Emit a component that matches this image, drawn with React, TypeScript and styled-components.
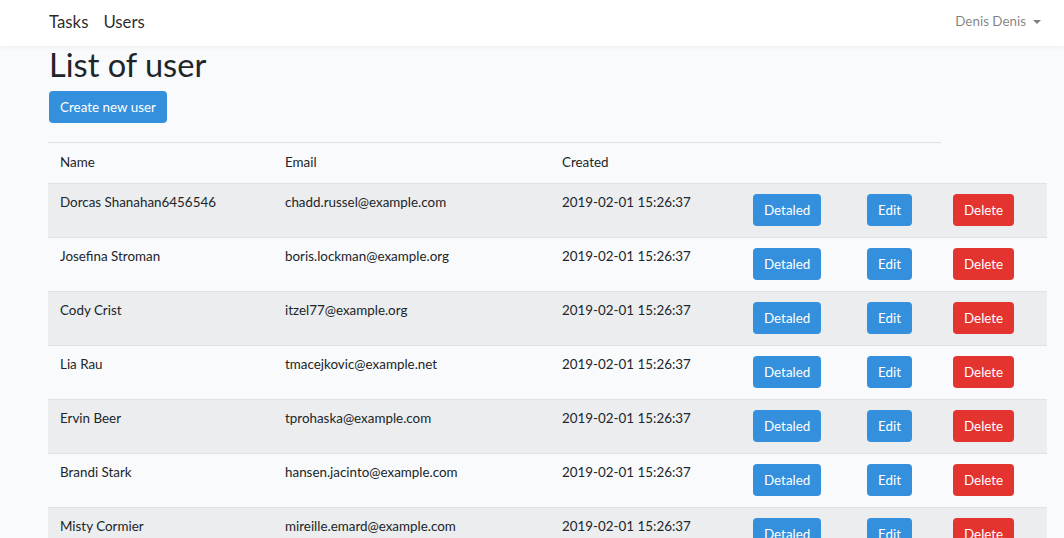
import React from "react";
import styled, { createGlobalStyle } from "styled-components";

const Global = createGlobalStyle`
  html, body { margin: 0; padding: 0; }
  body {
    background: #f8fafc;
    font-family: Lato, "Noto Sans", sans-serif;
    color: #212529;
    font-size: 13.4px;
    overflow: hidden;
  }
  * { box-sizing: border-box; }
`;

const Navbar = styled.nav`
  height: 46px;
  background: #fff;
  box-shadow: 0 2px 4px rgba(0, 0, 0, 0.04);
  display: flex;
  align-items: center;
  justify-content: space-between;
  padding: 0 23px 0 49px;
  position: relative;
  z-index: 1;
`;

const NavLinks = styled.div`
  display: flex;
  gap: 15px;
  margin-top: -4px;
`;

const NavLink = styled.a`
  font-size: 16.8px;
  color: rgba(0, 0, 0, 0.85);
  text-decoration: none;
`;

const UserMenu = styled.div`
  display: flex;
  align-items: center;
  gap: 7px;
  color: rgba(0, 0, 0, 0.5);
  font-size: 13.4px;
  margin-top: -4px;
`;

const Caret = styled.span`
  width: 0;
  height: 0;
  border-left: 4px solid transparent;
  border-right: 4px solid transparent;
  border-top: 4.5px solid rgba(0, 0, 0, 0.5);
  margin-top: 1px;
`;

const Main = styled.main`
  padding-left: 48px;
  display: flex;
  flex-direction: column;
  align-items: flex-start;
`;

const Title = styled.h1`
  margin: 0 0 0 1px;
  font-size: 32.6px;
  font-weight: 400;
  line-height: 38px;
`;

const Button = styled.button<{ $variant?: "primary" | "danger" }>`
  border: none;
  border-radius: 4px;
  background: ${(p) => (p.$variant === "danger" ? "#e3342f" : "#3490dc")};
  color: #fff;
  font-family: inherit;
  font-size: 13.4px;
  height: 32px;
  padding: 0 11px;
  cursor: pointer;
`;

const CreateButton = styled(Button)`
  margin: 7px 0 0 1px;
  width: 118px;
  padding: 0;
`;

const Table = styled.div`
  margin-top: 19px;
  width: 999px;
`;

const HeaderRow = styled.div`
  display: grid;
  grid-template-columns: 225px 277px 191px 114px 86px;
  height: 41px;
  border-top: 1px solid #dee2e6;
  width: 893px;
`;

const HeadCell = styled.div`
  padding: 8px 12px 0;
  line-height: 23px;
`;

const Row = styled.div<{ $striped: boolean }>`
  display: grid;
  grid-template-columns: 225px 277px 191px 114px 86px 106px;
  height: 54px;
  border-top: 1px solid #dee2e6;
  background: ${(p) => (p.$striped ? "rgba(0, 0, 0, 0.05)" : "transparent")};
`;

const Cell = styled.div`
  padding: 7px 12px 0;
  line-height: 23px;
  white-space: nowrap;
`;

const ButtonCell = styled.div`
  padding: 10px 12px 0;
`;

const users = [
  ["Dorcas Shanahan6456546", "chadd.russel@example.com"],
  ["Josefina Stroman", "boris.lockman@example.org"],
  ["Cody Crist", "itzel77@example.org"],
  ["Lia Rau", "tmacejkovic@example.net"],
  ["Ervin Beer", "tprohaska@example.com"],
  ["Brandi Stark", "hansen.jacinto@example.com"],
  ["Misty Cormier", "mireille.emard@example.com"],
];

export default function App() {
  return (
    <>
      <Global />
      <Navbar>
        <NavLinks>
          <NavLink href="#">Tasks</NavLink>
          <NavLink href="#">Users</NavLink>
        </NavLinks>
        <UserMenu>
          Denis Denis <Caret />
        </UserMenu>
      </Navbar>
      <Main>
        <Title>List of user</Title>
        <CreateButton>Create new user</CreateButton>
        <Table>
          <HeaderRow>
            <HeadCell>Name</HeadCell>
            <HeadCell>Email</HeadCell>
            <HeadCell>Created</HeadCell>
            <HeadCell />
            <HeadCell />
          </HeaderRow>
          {users.map(([name, email], i) => (
            <Row key={name} $striped={i % 2 === 0}>
              <Cell>{name}</Cell>
              <Cell>{email}</Cell>
              <Cell>2019-02-01 15:26:37</Cell>
              <ButtonCell>
                <Button>Detaled</Button>
              </ButtonCell>
              <ButtonCell>
                <Button>Edit</Button>
              </ButtonCell>
              <ButtonCell>
                <Button $variant="danger">Delete</Button>
              </ButtonCell>
            </Row>
          ))}
        </Table>
      </Main>
    </>
  );
}
